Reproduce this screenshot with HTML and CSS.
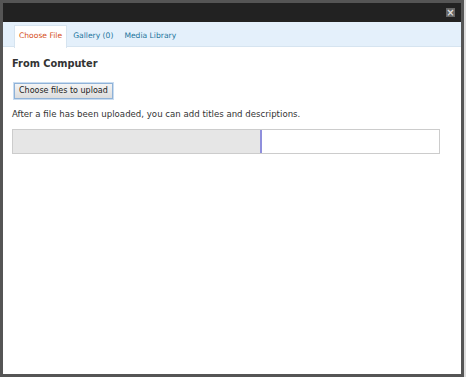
FILE: index.html
```html
<!DOCTYPE html>
<html lang="en">
<head>
    <meta charset="UTF-8">
    <title>Add Media</title>
    <link rel="stylesheet" href="styles.css">
</head>
<body>
    <div class="modal">
        <div class="titlebar">
            <a class="close" href="#">&times;</a>
        </div>

        <ul class="tabs">
            <li class="current"><a href="#">Choose File</a></li>
            <li><a href="#">Gallery (0)</a></li>
            <li><a href="#">Media Library</a></li>
        </ul>

        <div class="content">
            <h3>From Computer</h3>
            <button type="button" class="upload-button">Choose files to upload</button>
            <p class="note">After a file has been uploaded, you can add titles and descriptions.</p>

            <div class="progress">
                <div class="bar" style="width: 58.4%"></div>
            </div>
        </div>
    </div>
</body>
</html>
```

FILE: styles.css
```css
body {
    margin: 0;
    background-color: #dcdcdc;
    font-family: "DejaVu Sans", sans-serif;
    color: #333;
}

.modal {
    width: 464px;
    height: 377px;
    box-sizing: border-box;
    border: 3px solid #555;
    background: #fff;
}

.titlebar {
    height: 19px;
    background: #222;
    display: flex;
    justify-content: flex-end;
    align-items: center;
    padding-right: 6px;
}

.close {
    width: 9px;
    height: 9px;
    background: #666;
    color: #ddd;
    text-decoration: none;
    font-size: 10px;
    line-height: 9px;
    text-align: center;
    font-weight: bold;
}

.tabs {
    list-style: none;
    margin: 0;
    padding: 4px 0 0 11px;
    display: flex;
    background: #e4f0fb;
    border-bottom: 1px solid #d6e4f0;
    height: 20px;
}

.tabs li {
    margin-right: 1px;
}

.tabs a {
    display: block;
    padding: 5px 5px 0;
    height: 16px;
    font-size: 7.6px;
    color: #21759b;
    text-decoration: none;
}

.tabs .current a {
    background: #fff;
    color: #d54e21;
    border: 1px solid #d6e4f0;
    border-bottom: none;
    padding: 5px 4px 0;
    margin-top: -1px;
    height: 17px;
}

.content {
    padding: 11px 9px 0;
}

.content h3 {
    margin: 0 0 9px;
    font-size: 9.8px;
    font-weight: bold;
    color: #333;
}

.upload-button {
    font-family: "DejaVu Sans", sans-serif;
    font-size: 8px;
    color: #222;
    background: linear-gradient(#f4f4f4, #dcdcdc);
    border: 1px solid #8fb2d8;
    box-shadow: 0 0 0 1px #c9dcf0;
    padding: 2px 4px;
    margin-left: 2px;
    height: 16px;
}

.note {
    font-size: 8.6px;
    margin: 10px 0 10px;
}

.progress {
    width: 428px;
    height: 25px;
    box-sizing: border-box;
    border: 1px solid #ccc;
    background: #fff;
}

.bar {
    height: 100%;
    background: #e6e6e6;
    border-right: 2px solid #8f8fdc;
    box-sizing: border-box;
}
```
